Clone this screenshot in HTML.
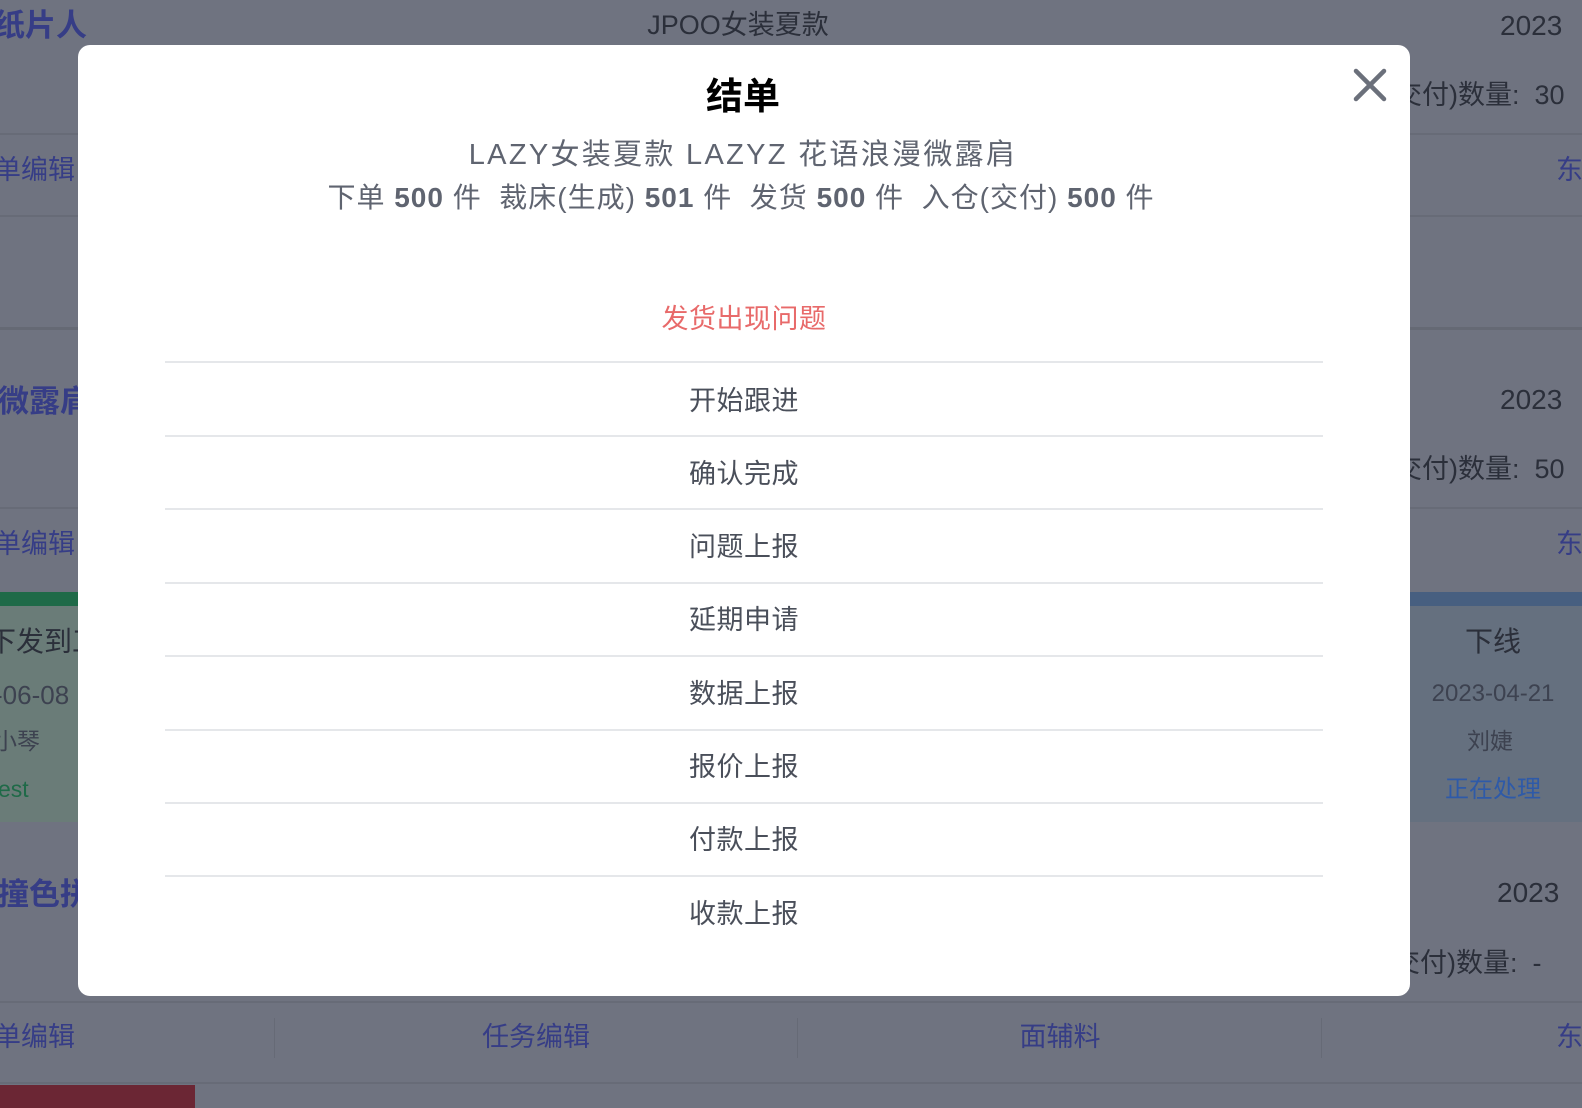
<!DOCTYPE html>
<html><head><meta charset="utf-8"><style>
*{margin:0;padding:0;box-sizing:border-box}
body{width:1582px;height:1108px;overflow:hidden;background:#6f7380;position:relative;font-family:"Liberation Sans","Noto Sans CJK SC",sans-serif}
.a{position:absolute;white-space:nowrap;line-height:1}
.c{transform:translateX(-50%)}
.hl{position:absolute;left:0;width:1582px;height:2px;background:#676b77}
.blue{color:#363d86}
.dark{color:#2b2f3a}
.modal{position:absolute;left:78px;top:45px;width:1332px;height:951px;background:#fff;border-radius:12px}
.item{position:absolute;left:87px;width:1158px;text-align:center;font-size:27px;color:#4a4f5a;line-height:1;letter-spacing:0.5px}
.div{position:absolute;left:87px;width:1158px;height:2px;background:#e5e7ea}
</style></head><body>
<div class="a blue" style="left:-6px;top:10px;font-size:31px;font-weight:bold">纸片人</div>
<div class="a dark c" style="left:738px;top:12px;font-size:27px">JPOO女装夏款</div>
<div class="a dark" style="left:1500px;top:12px;font-size:28px">2023</div>
<div class="a dark" style="left:1395px;top:82px;font-size:27px">交付)数量:&nbsp;&nbsp;30</div>
<div class="hl" style="top:133px"></div>
<div class="a blue" style="left:-6px;top:157px;font-size:27px">单编辑</div>
<div class="a blue" style="left:1556px;top:157px;font-size:27px">东</div>
<div class="hl" style="top:215px"></div>
<div style="position:absolute;left:0;top:327px;width:1582px;height:3px;background:#656974"></div>
<div class="a blue" style="left:-2px;top:386px;font-size:31px;font-weight:bold">微露肩</div>
<div class="a dark" style="left:1500px;top:386px;font-size:28px">2023</div>
<div class="a dark" style="left:1395px;top:456px;font-size:27px">交付)数量:&nbsp;&nbsp;50</div>
<div class="hl" style="top:507px"></div>
<div class="a blue" style="left:-6px;top:531px;font-size:27px">单编辑</div>
<div class="a blue" style="left:1556px;top:531px;font-size:27px">东</div>
<div style="position:absolute;left:0;top:592px;width:78px;height:14px;background:#1f6a48"></div>
<div style="position:absolute;left:0;top:606px;width:78px;height:216px;background:#6a7c78"></div>
<div class="a dark" style="left:-12px;top:628px;font-size:28px">下发到工</div>
<div class="a dark" style="left:-6px;top:682px;font-size:26px;color:#3d4250">-06-08</div>
<div class="a dark" style="left:-6px;top:730px;font-size:23px;color:#3d4250">小琴</div>
<div class="a" style="left:-2px;top:778px;font-size:23px;color:#1f6a48">est</div>
<div style="position:absolute;left:1410px;top:592px;width:172px;height:14px;background:#475f80"></div>
<div style="position:absolute;left:1410px;top:606px;width:172px;height:216px;background:#65707f"></div>
<div class="a dark c" style="left:1493px;top:628px;font-size:28px">下线</div>
<div class="a c" style="left:1493px;top:682px;font-size:24px;color:#3d4250">2023-04-21</div>
<div class="a c" style="left:1490px;top:730px;font-size:23px;color:#3d4250">刘婕</div>
<div class="a c" style="left:1493px;top:778px;font-size:24px;color:#2e5aa8">正在处理</div>
<div class="a blue" style="left:-2px;top:879px;font-size:31px;font-weight:bold">撞色拼</div>
<div class="a dark" style="left:1497px;top:879px;font-size:28px">2023</div>
<div class="a dark" style="left:1393px;top:950px;font-size:27px">交付)数量:&nbsp;&nbsp;-</div>
<div class="hl" style="top:1001px"></div>
<div class="a blue" style="left:-6px;top:1024px;font-size:27px">单编辑</div>
<div style="position:absolute;left:274px;top:1018px;width:1px;height:40px;background:#666a76"></div>
<div class="a blue c" style="left:536px;top:1024px;font-size:27px">任务编辑</div>
<div style="position:absolute;left:797px;top:1018px;width:1px;height:40px;background:#666a76"></div>
<div class="a blue c" style="left:1060px;top:1024px;font-size:27px">面辅料</div>
<div style="position:absolute;left:1321px;top:1018px;width:1px;height:40px;background:#666a76"></div>
<div class="a blue" style="left:1556px;top:1024px;font-size:27px">东</div>
<div class="hl" style="top:1082px"></div>
<div style="position:absolute;left:0;top:1085px;width:195px;height:23px;background:#6b2634"></div>
<div class="modal">
  <div class="a c" style="left:665px;top:33px;font-size:37px;font-weight:bold;color:#000">结单</div>
  <svg style="position:absolute;left:1275px;top:23px" width="34" height="34" viewBox="0 0 34 34"><path d="M3 3L31 31M31 3L3 31" stroke="#6b707b" stroke-width="4.5" stroke-linecap="round"/></svg>
  <div class="a c" style="left:665px;top:96px;font-size:29px;color:#5f6470;letter-spacing:2.3px">LAZY女装夏款 LAZYZ 花语浪漫微露肩</div>
  <div class="a c" style="left:663px;top:139px;font-size:28px;color:#5f6470;letter-spacing:1px">下单 <b>500</b> 件&nbsp; 裁床(生成) <b>501</b> 件&nbsp; 发货 <b>500</b> 件&nbsp; 入仓(交付) <b>500</b> 件</div>
  <div class="item" style="top:261px;color:#e86a6a">发货出现问题</div>
  <div class="div" style="top:316px"></div>
  <div class="item" style="top:343px">开始跟进</div>
  <div class="div" style="top:390px"></div>
  <div class="item" style="top:416px">确认完成</div>
  <div class="div" style="top:463px"></div>
  <div class="item" style="top:489px">问题上报</div>
  <div class="div" style="top:537px"></div>
  <div class="item" style="top:562px">延期申请</div>
  <div class="div" style="top:610px"></div>
  <div class="item" style="top:636px">数据上报</div>
  <div class="div" style="top:684px"></div>
  <div class="item" style="top:709px">报价上报</div>
  <div class="div" style="top:757px"></div>
  <div class="item" style="top:782px">付款上报</div>
  <div class="div" style="top:830px"></div>
  <div class="item" style="top:856px">收款上报</div>
</div>
</body></html>
